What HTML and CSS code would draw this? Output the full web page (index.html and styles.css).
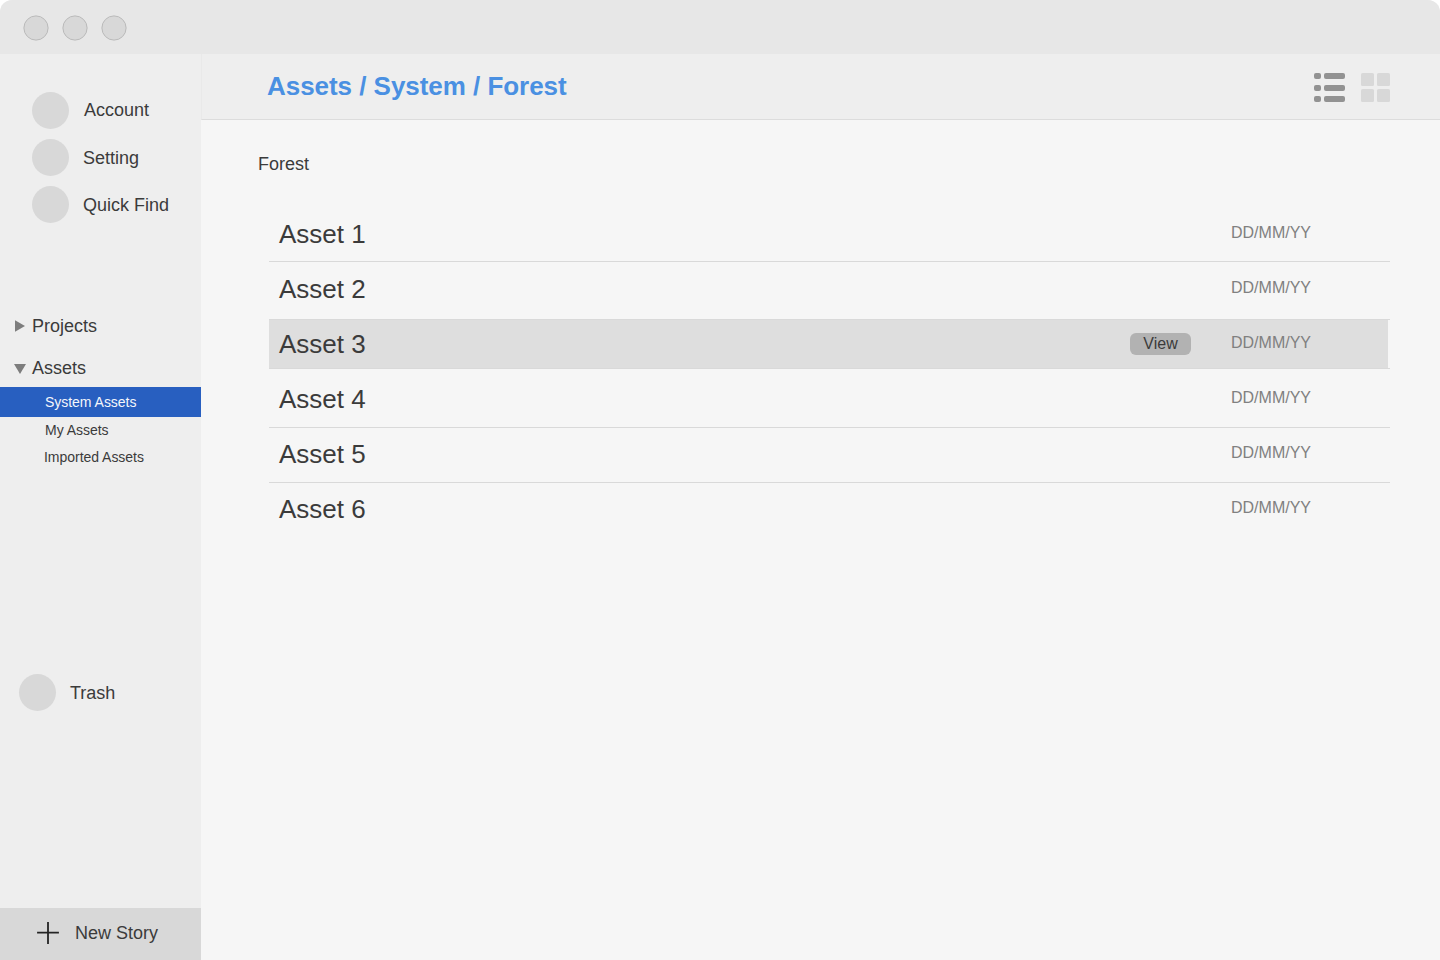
FILE: index.html
```html
<!DOCTYPE html>
<html lang="en">
<head>
<meta charset="utf-8">
<title>Assets / System / Forest</title>
<link rel="stylesheet" href="styles.css">
</head>
<body>
<div class="window">
  <header class="titlebar">
    <svg class="light" viewBox="0 0 26 26"><circle cx="13" cy="13" r="12.1"/></svg>
    <svg class="light" viewBox="0 0 26 26"><circle cx="13" cy="13" r="12.1"/></svg>
    <svg class="light" viewBox="0 0 26 26"><circle cx="13" cy="13" r="12.1"/></svg>
  </header>
  <div class="body">
    <aside class="sidebar">
      <nav class="shortcuts">
        <a class="shortcut shortcut-account"><span class="avatar"></span><span class="label">Account</span></a>
        <a class="shortcut"><span class="avatar"></span>Setting</a>
        <a class="shortcut"><span class="avatar"></span>Quick Find</a>
      </nav>
      <nav class="tree">
        <a class="branch"><svg class="arrow" viewBox="0 0 12 12"><path d="M1 0.2L11 6L1 11.8Z"/></svg>Projects</a>
        <a class="branch"><svg class="arrow" viewBox="0 0 12 12"><path d="M0 2H12L6 12Z"/></svg>Assets</a>
        <a class="leaf leaf-active">System Assets</a>
        <a class="leaf leaf-my">My Assets</a>
        <a class="leaf leaf-imported">Imported Assets</a>
      </nav>
      <a class="shortcut trash"><span class="avatar"></span>Trash</a>
      <button class="new-story">
        <svg class="plus" viewBox="0 0 22 22"><path d="M11 1V21M1 10.7H21"/></svg>New Story
      </button>
    </aside>
    <main class="main">
      <div class="toolbar">
        <h1 class="crumbs">Assets / System / Forest</h1>
        <div class="views">
          <svg class="list-icon" viewBox="0 0 31 29">
            <rect x="0" y="0" width="7" height="6" rx="2"/><rect x="10" y="0" width="21" height="6" rx="2"/>
            <rect x="0" y="12" width="7" height="6" rx="2"/><rect x="10" y="12" width="21" height="6" rx="2"/>
            <rect x="0" y="23" width="7" height="6" rx="2"/><rect x="10" y="23" width="21" height="6" rx="2"/>
          </svg>
          <svg class="grid-icon" viewBox="0 0 29 29">
            <rect x="0" y="0" width="13" height="13" rx="1.5"/><rect x="16" y="0" width="13" height="13" rx="1.5"/>
            <rect x="0" y="16" width="13" height="13" rx="1.5"/><rect x="16" y="16" width="13" height="13" rx="1.5"/>
          </svg>
        </div>
      </div>
      <h2 class="folder">Forest</h2>
      <div class="list">
        <div class="row row-1"><span class="name">Asset 1</span><span class="date">DD/MM/YY</span></div>
        <div class="row row-2"><span class="name">Asset 2</span><span class="date">DD/MM/YY</span></div>
        <div class="row row-selected"><span class="name">Asset 3</span><span class="view">View</span><span class="date">DD/MM/YY</span></div>
        <div class="row row-4"><span class="name">Asset 4</span><span class="date">DD/MM/YY</span></div>
        <div class="row row-5"><span class="name">Asset 5</span><span class="date">DD/MM/YY</span></div>
        <div class="row row-6"><span class="name">Asset 6</span><span class="date">DD/MM/YY</span></div>
      </div>
    </main>
  </div>
</div>
</body>
</html>
```
FILE: styles.css
```css
* { box-sizing: border-box; }
body { margin: 0; background: #fff; font-family: "Liberation Sans", Arial, sans-serif; color: #3b3b3b; }
.window { width: 1440px; height: 960px; display: flex; flex-direction: column; border-radius: 12px 12px 0 0; overflow: hidden; background: #f6f6f6; }
.titlebar { height: 54px; flex: none; display: flex; align-items: center; gap: 13px; padding: 2px 0 0 23px; background: #e7e7e7; }
.light { width: 26px; height: 26px; fill: #d8d8d8; stroke: #b9b9b9; stroke-width: 1; }
.body { flex: 1; display: flex; min-height: 0; }

.sidebar { width: 201px; flex: none; display: flex; flex-direction: column; background: #eee; }
.shortcuts { display: flex; flex-direction: column; gap: 10px; padding: 38px 0 0 32px; }
.shortcut { display: flex; align-items: center; gap: 14px; height: 37px; font-size: 18px; line-height: 22px; }
.shortcut-account { gap: 15px; }
.label { padding-bottom: 2px; }
.avatar { width: 37px; height: 37px; border-radius: 50%; background: #d8d8d8; }
.tree { margin-top: 82px; display: flex; flex-direction: column; }
.branch { display: flex; align-items: center; gap: 6px; height: 42px; padding-left: 14px; font-size: 18px; line-height: 22px; }
.branch + .branch { height: 40px; padding-top: 2px; }
.arrow { width: 12px; height: 12px; fill: #7d7d7d; }
.leaf { padding-left: 45px; font-size: 14px; letter-spacing: -0.03px; height: 27px; line-height: 27px; }
.leaf-active { height: 30px; line-height: 30px; background: #285fc0; color: #f4f6fb; }
.leaf-imported { padding-left: 44px; }
.trash { margin: 203px 0 0 19px; }
.new-story { margin-top: auto; height: 52px; display: flex; align-items: center; gap: 16px; padding: 0 0 2px 37px; border: 0; background: #d8d8d8; color: #3b3b3b; font: 18px "Liberation Sans", Arial, sans-serif; }
.plus { width: 22px; height: 22px; stroke: #242424; stroke-width: 1.8; stroke-linecap: square; }

.main { flex: 1; display: flex; flex-direction: column; }
.toolbar { height: 66px; flex: none; display: flex; justify-content: space-between; align-items: flex-start; padding: 17px 50px 0 65px; background: #eee; border-bottom: 1px solid #dcdcdc; border-left: 1px solid #e9e9e9; }
.crumbs { margin: 0; font-size: 26px; line-height: 30px; font-weight: 700; letter-spacing: -0.04px; color: #4a90e2; }
.views { display: flex; gap: 16px; padding-top: 2px; }
.list-icon { width: 31px; height: 29px; fill: #929292; }
.grid-icon { width: 29px; height: 29px; fill: #d8d8d8; }
.folder { margin: 33px 0 0 57px; font-size: 18px; line-height: 22px; font-weight: 400; }

.list { margin: 32px 50px 0 68px; display: flex; flex-direction: column; }
.row { display: flex; align-items: flex-start; height: 55px; padding: 11px 79px 0 10px; border-bottom: 1px solid #d9d9d9; }
.row-1 { padding-top: 12px; }
.row-2 { height: 57px; padding-top: 12px; border-bottom: 0; }
.row-selected { height: 50px; padding-top: 9px; border-top: 1px solid #d9d9d9; background: linear-gradient(#dedede, #dedede) 0 0 / 1119px 100% no-repeat; }
.row-4 { height: 59px; padding-top: 15px; }
.row-6 { border-bottom: 0; }
.name { flex: 1; font-size: 26px; line-height: 30px; }
.date { width: 80px; margin-top: 5px; font-size: 16px; line-height: 18px; color: #808080; white-space: nowrap; }
.view { width: 61px; height: 22px; margin: 4px 40px 0 0; border-radius: 6px; background: #b2b2b2; font-size: 16px; line-height: 22px; text-align: center; }
```
